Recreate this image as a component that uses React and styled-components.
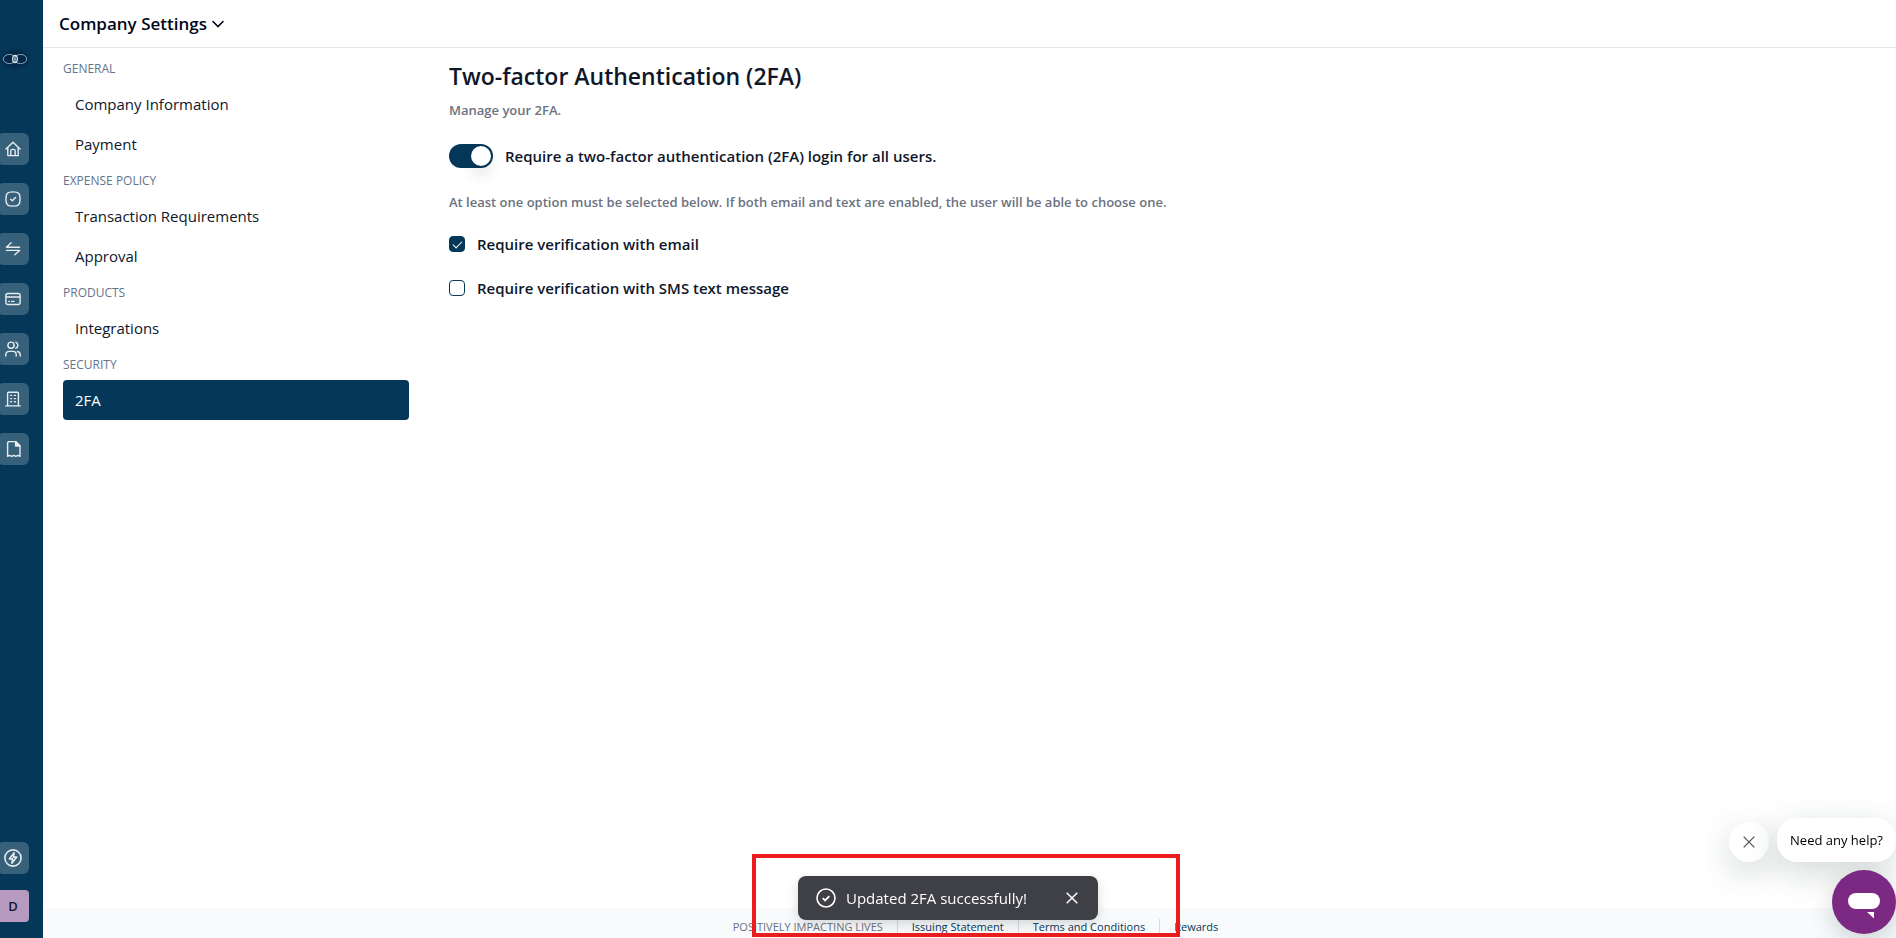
import React, { useState } from "react";
import styled, { createGlobalStyle } from "styled-components";

const icons = {
  home: (
    <>
      <path d="M1 8 8 1.200 15 8" />
      <path d="M2.800 6.600V14.600H13.200V6.600" />
      <path d="M5.800 14.400V10a1.600 1.600 0 0 1 1.600-1.600h1.200a1.600 1.600 0 0 1 1.600 1.600v4.400" />
    </>
  ),
  approvals: (
    <>
      <path d="M8 .9c5.600 0 7.100 1.500 7.100 7.100s-1.500 7.100-7.100 7.100S.9 13.600.9 8 2.400.9 8 .9Z" />
      <path d="m5.600 8.200 1.700 1.600 3.200-3.400" />
    </>
  ),
  transfers: (
    <>
      <path d="M14.600 6.200H1.400L6.200 1.800" />
      <path d="M1.400 9.400H14.600L9.800 13.800" />
    </>
  ),
  cards: (
    <>
      <rect x="0.9" y="2.500" width="14.200" height="11" rx="2" />
      <path d="M1 6h14M3.800 10.400h.6M6.600 10.400h2.400" />
    </>
  ),
  people: (
    <>
      <circle cx="6" cy="4.200" r="3.100" />
      <path d="M.8 15v-1.400a3.200 3.200 0 0 1 3.200-3.200h4a3.200 3.200 0 0 1 3.200 3.200V15" />
      <path d="M10.800 1.200a3.200 3.200 0 0 1 0 6M12.400 10.500a3.300 3.300 0 0 1 2.800 3.200V15" />
    </>
  ),
  building: (
    <>
      <path d="M2.600 14.800V2.200a1 1 0 0 1 1-1h8.800a1 1 0 0 1 1 1v12.600M.8 14.900h14.400" />
      <path d="M5.600 4.400h1M9.400 4.400h1M5.600 7.600h1M9.400 7.600h1M5.600 10.800h1M9.400 10.800h1" />
    </>
  ),
  receipts: (
    <>
      <path d="M10.600.5H4.400a1.800 1.800 0 0 0-1.800 1.800V15.400l2-1 2.100 1 2.100-1 2.100 1 2.100-1 2 1V5Z" />
      <path d="M10.600.6V5H15Z" fill="currentColor" />
    </>
  ),
  bolt: (
    <>
      <circle cx="8" cy="8" r="7.200" />
      <path d="M9 3.400 4.700 8.800H7.700L7 12.600 11.300 7.200H8.300Z" />
    </>
  ),
};

const mainLinks = [
  ["home", "Home"],
  ["approvals", "Approvals"],
  ["transfers", "Transfers"],
  ["cards", "Cards"],
  ["people", "People"],
  ["building", "Company"],
  ["receipts", "Receipts"],
];

const sections = [
  { title: "GENERAL", items: ["Company Information", "Payment"] },
  { title: "EXPENSE POLICY", items: ["Transaction Requirements", "Approval"] },
  { title: "PRODUCTS", items: ["Integrations"] },
  { title: "SECURITY", items: ["2FA"] },
];

const Icon = ({ name, size = 16 }) => (
  <svg
    width={size}
    height={size}
    viewBox="0 0 16 16"
    fill="none"
    stroke="currentColor"
    strokeWidth="1.400"
    strokeLinecap="round"
    strokeLinejoin="round"
    aria-hidden="true"
  >
    {icons[name]}
  </svg>
);

const Logo = () => (
  <svg width="32" height="24" viewBox="0 0 32 24" fill="none" aria-hidden="true">
    <defs>
      <radialGradient id="logo-shade">
        <stop offset="0.6" stopColor="#02294a" />
        <stop offset="1" stopColor="#043354" />
      </radialGradient>
    </defs>
    <ellipse cx="16" cy="12" rx="15" ry="11" fill="url(#logo-shade)" />
    <g stroke="#8ba2b4" strokeWidth="1">
      <ellipse cx="10.500" cy="12" rx="6.200" ry="4.600" />
      <ellipse cx="21.500" cy="12" rx="6.200" ry="4.600" />
    </g>
    <ellipse cx="16" cy="12" rx="2.300" ry="3.600" stroke="#dfe7ed" strokeWidth="1.300" />
  </svg>
);

const App = () => {
  const [active, setActive] = useState("2FA");
  const [required, setRequired] = useState(true);
  const [email, setEmail] = useState(true);
  const [sms, setSms] = useState(false);
  const [toast, setToast] = useState(true);
  const [help, setHelp] = useState(true);

  return (
    <>
      <GlobalStyle />
      <Page>
        <Sidebar>
          <LogoLink href="#" aria-label="Dashboard">
            <Logo />
          </LogoLink>
          <IconList>
            {mainLinks.map(([name, label]) => (
              <IconLink key={name} href={`#${name}`} aria-label={label}>
                <Icon name={name} />
              </IconLink>
            ))}
          </IconList>
          <AccountList>
            <IconLink href="#activity" aria-label="Activity">
              <Icon name="bolt" size={18} />
            </IconLink>
            <Avatar type="button">D</Avatar>
          </AccountList>
        </Sidebar>

        <Content>
          <Header>
            <TitleButton type="button">
              Company Settings
              <svg width="12" height="8" viewBox="0 0 12 8" fill="none" aria-hidden="true">
                <path d="m1 1.500 5 5 5-5" stroke="currentColor" strokeWidth="1.600" strokeLinecap="round" />
              </svg>
            </TitleButton>
          </Header>

          <Body>
            <SettingsNav>
              {sections.map(({ title, items }) => (
                <section key={title}>
                  <NavHeading>{title}</NavHeading>
                  {items.map((item) => (
                    <NavItem
                      key={item}
                      href="#settings"
                      $active={item === active}
                      onClick={() => setActive(item)}
                    >
                      {item}
                    </NavItem>
                  ))}
                </section>
              ))}
            </SettingsNav>

            <Main>
              <Title>Two-factor Authentication (2FA)</Title>
              <Subtitle>Manage your 2FA.</Subtitle>
              <OptionLabel>
                <Switch
                  type="checkbox"
                  role="switch"
                  checked={required}
                  onChange={(e) => setRequired(e.target.checked)}
                />
                Require a two-factor authentication (2FA) login for all users.
              </OptionLabel>
              <Note>
                At least one option must be selected below. If both email and
                text are enabled, the user will be able to choose one.
              </Note>
              <Options>
                <OptionLabel>
                  <Checkbox
                    type="checkbox"
                    checked={email}
                    onChange={(e) => setEmail(e.target.checked)}
                  />
                  Require verification with email
                </OptionLabel>
                <OptionLabel>
                  <Checkbox
                    type="checkbox"
                    checked={sms}
                    onChange={(e) => setSms(e.target.checked)}
                  />
                  Require verification with SMS text message
                </OptionLabel>
              </Options>
            </Main>
          </Body>

          <Footer>
            <span>POSITIVELY IMPACTING LIVES</span>
            <Divider />
            <FooterLink href="#issuing">Issuing Statement</FooterLink>
            <Divider />
            <FooterLink href="#terms">Terms and Conditions</FooterLink>
            <Divider />
            <FooterLink href="#rewards">Rewards</FooterLink>
          </Footer>
        </Content>
      </Page>

      {toast && (
        <Toast role="status">
          <svg width="20" height="20" viewBox="0 0 20 20" fill="none" stroke="currentColor" strokeWidth="1.600" aria-hidden="true">
            <circle cx="10" cy="10" r="9" />
            <path d="m6.800 10.200 2.300 2.200 4.200-4.300" strokeWidth="1.800" />
          </svg>
          <ToastText>Updated 2FA successfully!</ToastText>
          <ToastClose type="button" aria-label="Dismiss" onClick={() => setToast(false)}>
            <svg width="12" height="12" viewBox="0 0 12 12" stroke="currentColor" strokeWidth="1.500" aria-hidden="true">
              <path d="m.7.7 10.600 10.600M11.300.7.7 11.300" />
            </svg>
          </ToastClose>
        </Toast>
      )}
      <Highlight />

      <ChatWidget>
        {help && (
          <HelpRow>
            <HelpClose type="button" aria-label="Close" onClick={() => setHelp(false)}>
              <svg width="12" height="12" viewBox="0 0 12 12" stroke="currentColor" strokeWidth="1.200" aria-hidden="true">
                <path d="m.7.7 10.600 10.600M11.300.7.7 11.300" />
              </svg>
            </HelpClose>
            <HelpBubble>Need any help?</HelpBubble>
          </HelpRow>
        )}
        <ChatButton type="button" aria-label="Open chat">
          <svg width="32" height="26" viewBox="0 0 32 26" fill="#fff" aria-hidden="true">
            <rect width="32" height="16" rx="8" />
            <path d="M19 19h7v6.500Z" />
          </svg>
        </ChatButton>
      </ChatWidget>
    </>
  );
};

export default App;

const GlobalStyle = createGlobalStyle`
  * {
    box-sizing: border-box;
  }

  body {
    margin: 0;
    overflow: hidden;
    background: #fff;
    color: #0f172a;
    font-family: "Segoe UI", "Open Sans", "Noto Sans", sans-serif;
    font-size: 15px;
    line-height: 24px;
  }

  button {
    padding: 0;
    border: none;
    color: inherit;
    font: inherit;
    cursor: pointer;
  }

  a {
    text-decoration: none;
  }

  svg {
    display: block;
    flex-shrink: 0;
  }
`;

const Page = styled.div`
  display: flex;
  height: 100vh;
`;

const Sidebar = styled.aside`
  display: flex;
  flex-direction: column;
  flex: 0 0 43px;
  padding: 47px 0 16px;
  overflow: hidden;
  background: #053858;
`;

const LogoLink = styled.a`
  margin-left: -1px;
`;

const IconList = styled.nav`
  display: flex;
  flex-direction: column;
  gap: 18px;
  margin: 62px 0 0 -3px;
`;

const AccountList = styled.div`
  display: flex;
  flex-direction: column;
  gap: 16px;
  margin: auto 0 0 -3px;
`;

const IconLink = styled.a`
  display: flex;
  align-items: center;
  justify-content: center;
  width: 32px;
  height: 32px;
  border-radius: 6px;
  background: #37607a;
  color: #e6ecf0;
`;

const Avatar = styled.button`
  width: 32px;
  height: 32px;
  border-radius: 4px;
  background: #b79abf;
  color: #0f172a;
  font-size: 13px;
  font-weight: 600;
`;

const Content = styled.div`
  display: flex;
  flex: 1;
  flex-direction: column;
  min-width: 0;
`;

const Header = styled.header`
  display: flex;
  align-items: center;
  height: 48px;
  padding: 0 16px;
  border-bottom: 1px solid #e2e8f0;
  color: #020617;
`;

const TitleButton = styled.button`
  display: flex;
  align-items: center;
  gap: 5px;
  background: none;
  font-size: 17px;
  font-weight: 600;
`;

const Body = styled.div`
  display: flex;
  flex: 1;
  gap: 40px;
  padding: 4px 20px 0;
`;

const SettingsNav = styled.nav`
  flex: 0 0 346px;
`;

const NavHeading = styled.h2`
  margin: 0;
  padding-top: 2px;
  color: #64748b;
  font-size: 12px;
  font-weight: 500;
  line-height: 30px;
`;

const NavItem = styled.a`
  display: block;
  padding: 0 12px;
  border-radius: 4px;
  background: ${({ $active }) => ($active ? "#053858" : "transparent")};
  color: ${({ $active }) => ($active ? "#fff" : "#0f172a")};
  line-height: 40px;
`;

const Main = styled.main`
  flex: 1;
  padding-top: 8px;
`;

const Title = styled.h1`
  margin: 0;
  font-size: 23px;
  font-weight: 600;
  line-height: 32px;
`;

const Subtitle = styled.p`
  margin: 6px 0 22px;
  color: #6b7280;
  font-size: 13px;
  font-weight: 600;
`;

const OptionLabel = styled.label`
  display: flex;
  align-items: center;
  gap: 12px;
  width: fit-content;
  font-weight: 600;
  cursor: pointer;
`;

const Note = styled(Subtitle)`
  margin: 22px 0 18px;
`;

const Options = styled.div`
  display: flex;
  flex-direction: column;
  gap: 20px;
`;

const Switch = styled.input`
  appearance: none;
  width: 44px;
  height: 24px;
  margin: 0;
  padding: 2px;
  border-radius: 12px;
  background: ${({ checked }) => (checked ? "#053858" : "#cbd5e1")};

  &::before {
    content: "";
    display: block;
    width: 20px;
    height: 20px;
    margin-left: ${({ checked }) => (checked ? "20px" : "0")};
    border-radius: 50%;
    background: #fff;
    box-shadow: 0 10px 15px rgba(0, 0, 0, 0.1);
  }
`;

const Checkbox = styled.input`
  appearance: none;
  display: grid;
  place-items: center;
  width: 16px;
  height: 16px;
  margin: 0;
  border: 1px solid #053858;
  border-radius: 4px;
  background: ${({ checked }) => (checked ? "#053858" : "#fff")};

  &:checked::before {
    content: "";
    width: 8px;
    height: 4px;
    margin-bottom: 2px;
    border: solid #fff;
    border-width: 0 0 1px 1px;
    transform: rotate(-45deg);
  }
`;

const Footer = styled.footer`
  display: flex;
  justify-content: center;
  gap: 14px;
  height: 30px;
  padding: 11px 0 0 12px;
  overflow: hidden;
  background: #f8fafc;
  color: #6b7280;
  font-size: 11px;
  line-height: 16px;
`;

const Divider = styled.span`
  width: 1px;
  height: 16px;
  background: #d5dbe3;
`;

const FooterLink = styled.a`
  color: #053858;
`;

const Toast = styled.div`
  position: fixed;
  bottom: 18px;
  left: 50%;
  display: flex;
  align-items: center;
  gap: 10px;
  width: 300px;
  height: 44px;
  padding: 0 20px 0 18px;
  border-radius: 8px;
  background: #3f3f46;
  color: #fff;
  box-shadow: 0 4px 12px rgba(0, 0, 0, 0.15);
  transform: translateX(-50%);
`;

const ToastText = styled.span`
  flex: 1;
  white-space: nowrap;
`;

const ToastClose = styled.button`
  background: none;
`;

const Highlight = styled.div`
  position: fixed;
  bottom: 1px;
  left: 50%;
  width: 428px;
  height: 83px;
  margin-left: -196px;
  border: 4px solid #ea1c1c;
  pointer-events: none;
`;

const ChatWidget = styled.div`
  position: fixed;
  right: 0;
  bottom: 4px;
  display: flex;
  flex-direction: column;
  align-items: flex-end;
  gap: 8px;
`;

const HelpRow = styled.div`
  display: flex;
  align-items: flex-end;
  gap: 8px;
`;

const HelpClose = styled.button`
  display: flex;
  align-items: center;
  justify-content: center;
  width: 40px;
  height: 40px;
  border-radius: 50%;
  background: #fff;
  color: #475056;
  box-shadow: 0 10px 34px rgba(20, 60, 50, 0.2);
`;

const HelpBubble = styled.div`
  padding: 10px 13px;
  border-radius: 20px;
  background: #fff;
  color: #000;
  font-size: 13px;
  box-shadow: 0 10px 34px rgba(20, 60, 50, 0.2);
`;

const ChatButton = styled.button`
  display: flex;
  align-items: center;
  justify-content: center;
  width: 64px;
  height: 64px;
  padding-top: 8px;
  border-radius: 50%;
  background: #7b2982;
  box-shadow: 0 8px 24px rgba(20, 60, 50, 0.2);
`;
